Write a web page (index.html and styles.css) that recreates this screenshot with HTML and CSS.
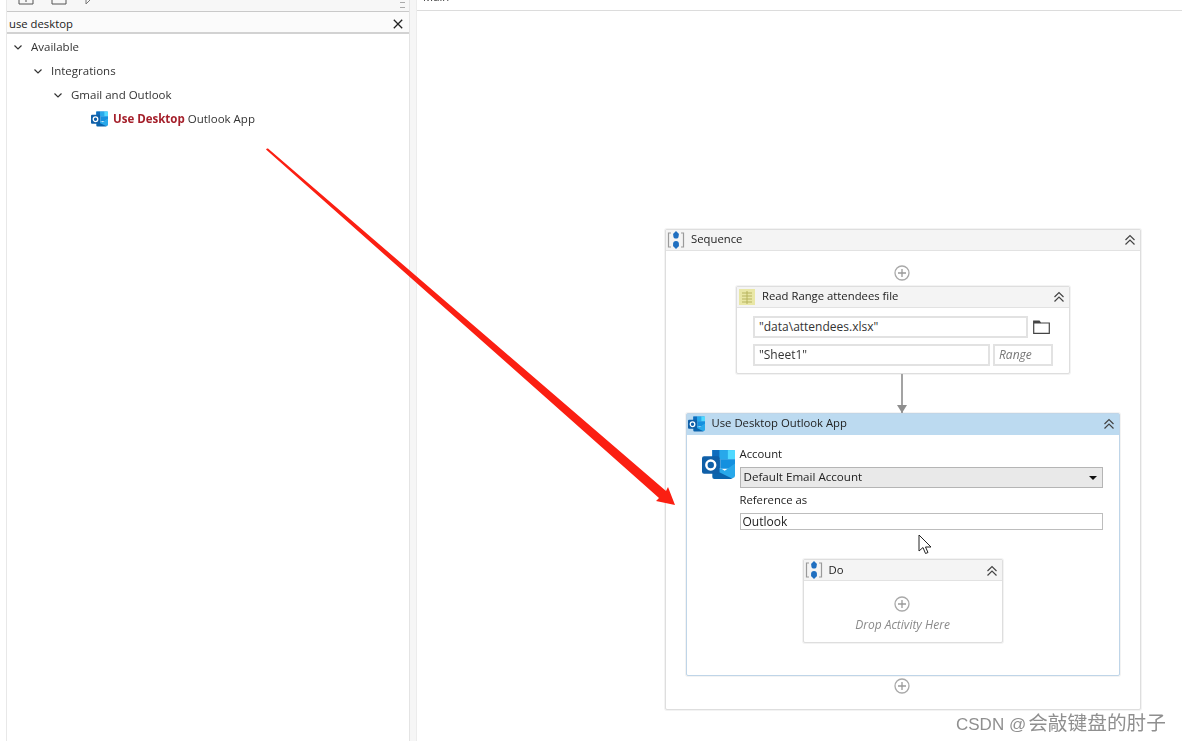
FILE: index.html
```html
<!DOCTYPE html>
<html lang="en">
<head>
<meta charset="utf-8">
<title>Use Desktop Outlook App</title>
<link rel="stylesheet" href="styles.css">
</head>
<body>
<svg class="defs" width="0" height="0" aria-hidden="true">
  <symbol id="outlook" viewBox="0 0 32 30">
    <path d="M10 1h20a2 2 0 0 1 2 2v7H10z" fill="#1490df"/>
    <path d="M10 1h7v9h-7z" fill="#0f6cbd"/>
    <path d="M17 1h8v9h-8z" fill="#28a8ea"/>
    <path d="M25 1h7v9h-7z" fill="#50d9ff"/>
    <path d="M10 10h8v9h-8z" fill="#0f6cbd"/>
    <path d="M18 10h14v5l-6 4h-8z" fill="#1490df"/>
    <path d="M10 19l11 9h9a2 2 0 0 0 2-2V14l-10 7-3-2z" fill="#28a8ea"/>
    <path d="M10 19v8a2 2 0 0 0 2 2h18z" fill="#0a64ad"/>
    <rect x="0" y="7" width="17" height="17" rx="2" fill="#0f5fa8"/>
    <circle cx="8.500" cy="15.500" r="4.300" fill="none" stroke="#fff" stroke-width="2.400"/>
  </symbol>
  <symbol id="seq" viewBox="0 0 18 18">
    <path d="M4 2H1.500v14H4M14 2h2.500v14H14" fill="none" stroke="#9a9a9a" stroke-width="1.200"/>
    <path d="M9 0l3 3-1 2.500H7L6 3z" fill="#1f6fc0"/>
    <path d="M9 18l-3-3 1-3.500h4l1 3.500z" fill="#1f6fc0"/>
    <circle cx="9" cy="5" r="2.600" fill="#1f6fc0"/>
    <circle cx="9" cy="13" r="2.900" fill="#1f6fc0"/>
  </symbol>
  <symbol id="up" viewBox="0 0 12 12">
    <path d="M1.500 6L6 1.500 10.500 6M1.500 10.500L6 6l4.500 4.500" fill="none" stroke="#444" stroke-width="1.200"/>
  </symbol>
  <symbol id="plus" viewBox="0 0 16 16">
    <circle cx="8" cy="8" r="7" fill="#fff" stroke="#a9a9a9" stroke-width="1.300"/>
    <path d="M8 4v8M4 8h8" stroke="#9a9a9a" stroke-width="1.300"/>
  </symbol>
  <symbol id="chev" viewBox="0 0 10 10">
    <path d="M1.500 3.500L5 7l3.500-3.500" fill="none" stroke="#333" stroke-width="1.200"/>
  </symbol>
</svg>

<div class="app">
  <aside class="side">
    <div class="toolbar">
      <svg class="tool" width="16" height="5" viewBox="0 0 16 5"><path d="M1 0v4h14V0M8 0v2" fill="none" stroke="#555"/></svg>
      <svg class="tool" width="16" height="5" viewBox="0 0 16 5"><path d="M1 0v4h14V0" fill="none" stroke="#555"/></svg>
      <svg class="tool" width="10" height="5" viewBox="0 0 10 5"><path d="M2 0v4l4-4" fill="none" stroke="#777"/></svg>
      <span class="grip"></span>
    </div>
    <div class="search">
      <span>use desktop</span>
      <svg width="10" height="10" viewBox="0 0 10 10"><path d="M.8.800l8.400 8.400M9.200.800L.8 9.200" stroke="#222" stroke-width="1.300"/></svg>
    </div>
    <ul class="tree">
      <li class="level-0"><svg class="chev"><use href="#chev"/></svg>Available</li>
      <li class="level-1"><svg class="chev"><use href="#chev"/></svg>Integrations</li>
      <li class="level-2"><svg class="chev"><use href="#chev"/></svg>Gmail and Outlook</li>
      <li class="level-3"><svg class="tree-icon"><use href="#outlook"/></svg><b>Use Desktop</b>&nbsp;Outlook App</li>
    </ul>
  </aside>
  <div class="gutter"></div>

  <main class="main">
    <div class="tab"><span>Main</span></div>
    <div class="canvas">
      <section class="card sequence">
        <header class="head">
          <svg class="seq-icon"><use href="#seq"/></svg>
          <span class="title">Sequence</span>
          <svg class="collapse"><use href="#up"/></svg>
        </header>
        <div class="seq-body">
          <svg class="plus first"><use href="#plus"/></svg>

          <section class="card read">
            <header class="head">
              <svg class="sheet" viewBox="0 0 16 16"><rect width="16" height="16" fill="#e9e7a6"/><path d="M3 4h10M3 7h10M3 10h10M3 13h10M8 2v13" stroke="#b7b45f"/></svg>
              <span class="title">Read Range attendees file</span>
              <svg class="collapse"><use href="#up"/></svg>
            </header>
            <div class="read-body">
              <div class="row">
                <span class="field path">"data\attendees.xlsx"</span>
                <span class="folder">
                  <svg width="17" height="14" viewBox="0 0 17 14"><path d="M.7 13.300V1h5.500l1.500 2h8.600v10.300z" fill="none" stroke="#444" stroke-width="1.200"/><path d="M.7 1h5.500l1.500 2.500H.7z" fill="#444"/></svg>
                </span>
              </div>
              <div class="row">
                <span class="field sheet-name">"Sheet1"</span>
                <span class="field range">Range</span>
              </div>
            </div>
          </section>

          <div class="connector"></div>

          <section class="card outlook">
            <header class="head blue">
              <svg class="head-outlook"><use href="#outlook"/></svg>
              <span class="title">Use Desktop Outlook App</span>
              <svg class="collapse"><use href="#up"/></svg>
            </header>
            <div class="outlook-body">
              <div class="form">
                <svg class="big-outlook"><use href="#outlook"/></svg>
                <div class="form-fields">
                  <label class="label">Account</label>
                  <div class="select"><span>Default Email Account</span><i class="caret"></i></div>
                  <label class="label second">Reference as</label>
                  <div class="textbox">Outlook</div>
                </div>
              </div>
              <section class="card do">
                <header class="head">
                  <svg class="seq-icon"><use href="#seq"/></svg>
                  <span class="title">Do</span>
                  <svg class="collapse"><use href="#up"/></svg>
                </header>
                <div class="do-body">
                  <svg class="plus"><use href="#plus"/></svg>
                  <em>Drop Activity Here</em>
                </div>
              </section>
            </div>
          </section>

          <svg class="plus last"><use href="#plus"/></svg>
        </div>
      </section>
    </div>
  </main>
</div>

<svg class="pointer" width="14" height="22" viewBox="0 0 14 22"><path d="M1 1v16l4-3.500 2.500 6 2.500-1-2.500-5.500h5.500z" fill="#fff" stroke="#222"/></svg>
<svg class="arrow" width="1182" height="741" viewBox="0 0 1182 741"><polygon points="267,148.500 268,148.500 666,491 668,487 675,505 656,501 659,498 266,149.500" fill="#fb1f12"/></svg>
<div class="watermark">CSDN @<span class="cjk">会敲键盘的肘子</span></div>
</body>
</html>
```
FILE: styles.css
```css
* { box-sizing: border-box; }
html, body { margin: 0; height: 100%; }
body {
  position: relative;
  width: 1182px;
  height: 741px;
  overflow: hidden;
  background: #fff;
  color: #333;
  font: 11.3px/16px "Open Sans", "Liberation Sans", sans-serif;
}
.defs { position: absolute; }
.app {
  display: flex;
  height: 741px;
  filter: blur(0.4px);
}

/* left panel */
.side {
  width: 403px;
  margin-left: 6px;
  border-left: 1px solid #e8e8e8;
  display: flex;
  flex-direction: column;
}
.gutter {
  width: 8px;
  background: #f6f6f6;
  border-left: 1px solid #e4e4e4;
  border-right: 1px solid #ececec;
}
.toolbar {
  height: 12px;
  display: flex;
  align-items: flex-start;
  gap: 17px;
  padding-left: 11px;
  background: #f7f7f7;
  border-bottom: 1px solid #c9c9c9;
}
.grip {
  margin: 2px 4px 0 auto;
  width: 5px;
  height: 6px;
  border-top: 1px solid #aaa;
  border-bottom: 1px solid #aaa;
}
.search {
  height: 22px;
  display: flex;
  align-items: center;
  justify-content: space-between;
  padding: 3px 6px 0 2px;
  background: #fbfbfb;
  border-bottom: 2px solid #d2d2d2;
  color: #222;
}
.tree {
  list-style: none;
  margin: 0;
  padding: 1px 0 0;
  font-size: 11.5px;
}
.tree li {
  height: 24px;
  display: flex;
  align-items: center;
}
.level-0 { padding-left: 6px; }
.level-1 { padding-left: 26px; }
.level-2 { padding-left: 46px; }
.level-3 { padding-left: 84px; }
.chev { width: 10px; height: 10px; margin-right: 8px; }
.tree-icon { width: 17px; height: 16px; margin-right: 5px; }
.tree b { color: #a5202b; font-weight: 700; }

/* main */
.main { width: 765px; }
.tab {
  height: 11px;
  overflow: hidden;
  border-bottom: 1px solid #dcdcdc;
  padding-left: 6px;
}
.tab span { display: block; margin-top: -11px; }
.canvas { padding: 218px 0 0 248px; }

/* activity cards */
.card {
  background: #fff;
  border: 1px solid #dedede;
  border-radius: 2px;
  box-shadow: 0 0 0 1px #f3f3f3;
}
.head {
  height: 21px;
  display: flex;
  align-items: center;
  background: #f4f4f4;
  border-bottom: 1px solid #e2e2e2;
  color: #222;
}
.head.blue {
  background: #bcdaf0;
  border-bottom-color: #bcdaf0;
}
.title { flex: 1; margin-top: -2px; }
.seq-icon { width: 18px; height: 18px; margin: 0 6px 0 1px; }
.collapse { width: 12px; height: 12px; margin-right: 4px; }
.sequence { width: 476px; height: 481px; }
.seq-body {
  display: flex;
  flex-direction: column;
  align-items: center;
  padding-top: 14px;
}
.plus { width: 16px; height: 16px; display: block; }
.first, .last, .connector { margin-left: -3px; }
.read { width: 334px; height: 88px; margin-top: 5px; }
.sheet { width: 16px; height: 16px; margin: 0 7px 0 2px; }
.read-body {
  padding: 8px 16px 0;
  display: flex;
  flex-direction: column;
  gap: 6px;
  font-size: 12px;
}
.row { display: flex; gap: 3px; }
.field {
  height: 22px;
  padding: 0 4px;
  border: 2px solid #e2e2e2;
  line-height: 18px;
  background: #fff;
}
.path { width: 275px; }
.sheet-name { width: 237px; }
.range { width: 60px; color: #777; font-style: italic; }
.folder {
  width: 22px;
  height: 22px;
  padding-right: 2px;
  display: flex;
  align-items: center;
  justify-content: center;
}
.connector {
  position: relative;
  width: 2px;
  height: 39px;
  background: #a3a3a3;
}
.connector::after {
  content: "";
  position: absolute;
  left: -4px;
  bottom: 0;
  border: 5px solid transparent;
  border-top: 8px solid #8e8e8e;
  border-bottom: 0;
}
.outlook {
  width: 434px;
  height: 263px;
  margin-left: -1px;
  border-color: #bfd5e8;
}
.head-outlook { width: 17px; height: 16px; margin: 0 7px 0 1px; }
.outlook-body { padding: 11px 16px 0 15px; }
.form { display: flex; }
.big-outlook { width: 33px; height: 31px; margin: 3px 5px 0 0; }
.form-fields { flex: 1; }
.label { display: block; height: 21px; line-height: 16px; color: #222; }
.label.second { height: 25px; padding-top: 4px; line-height: 16px; }
.select {
  height: 21px;
  display: flex;
  align-items: center;
  justify-content: space-between;
  padding: 0 5px 0 3px;
  background: #e9e9e9;
  border: 1px solid #b5b5b5;
  color: #222;
  font-size: 11.6px;
}
.select span { margin-top: -2px; }
.caret {
  border: 4px solid transparent;
  border-top: 4px solid #111;
  border-bottom: 0;
}
.textbox {
  height: 17px;
  padding-left: 2px;
  border: 1px solid #bdbdbd;
  line-height: 15px;
  color: #222;
  font-size: 12px;
}
.do { width: 200px; height: 84px; margin: 29px 0 0 101px; }
.do .title { margin-top: 0; }
.do .collapse { margin-top: 2px; }
.do-body {
  display: flex;
  flex-direction: column;
  align-items: center;
  padding-top: 15px;
}
.do-body .plus { margin-right: 2px; }
.do-body em { margin-top: 5px; color: #8a8a8a; font-size: 12px; }
.last { margin-top: 2px; }

/* overlays */
.pointer { position: absolute; left: 918px; top: 534px; }
.arrow { position: absolute; left: 0; top: 0; }
.watermark {
  position: absolute;
  left: 956px;
  top: 710px;
  color: #8f8f8f;
  font: 17px/24px "Liberation Sans", "Noto Sans CJK SC", sans-serif;
  white-space: nowrap;
}
.cjk { margin-left: 2px; font-size: 19.7px; font-family: "Noto Sans CJK SC", sans-serif; }
```
